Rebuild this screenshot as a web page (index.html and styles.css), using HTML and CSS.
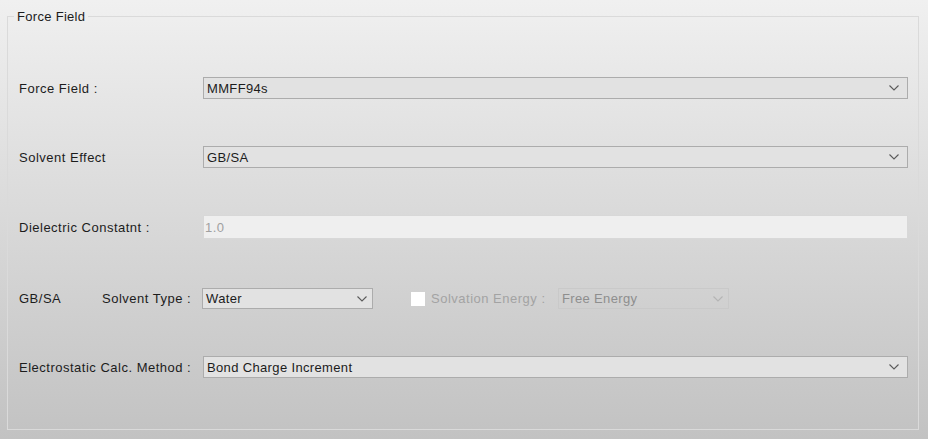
FILE: index.html
```html
<!DOCTYPE html>
<html>
<head>
<meta charset="utf-8">
<link rel="stylesheet" href="styles.css">
</head>
<body>
<fieldset class="group">
  <legend class="group-title">Force Field</legend>
  <div class="rows">
    <div class="row">
      <span class="label">Force Field :</span>
      <div class="combo"><span class="value">MMFF94s</span><svg class="chev" width="10" height="6" viewBox="0 0 10 6"><path d="M0.5 0.5 L5 5 L9.5 0.5" fill="none" stroke="#5a5a5a" stroke-width="1.1"/></svg></div>
    </div>
    <div class="row">
      <span class="label">Solvent Effect</span>
      <div class="combo"><span class="value">GB/SA</span><svg class="chev" width="10" height="6" viewBox="0 0 10 6"><path d="M0.5 0.5 L5 5 L9.5 0.5" fill="none" stroke="#5a5a5a" stroke-width="1.1"/></svg></div>
    </div>
    <div class="row row-input">
      <span class="label">Dielectric Constatnt :</span>
      <div class="textbox disabled"><span class="value">1.0</span></div>
    </div>
    <div class="row row-gbsa">
      <span class="label-short">GB/SA</span>
      <span class="label-mid">Solvent Type :</span>
      <div class="combo combo-small"><span class="value">Water</span><svg class="chev" width="10" height="6" viewBox="0 0 10 6"><path d="M0.5 0.5 L5 5 L9.5 0.5" fill="none" stroke="#5a5a5a" stroke-width="1.1"/></svg></div>
      <span class="check"></span>
      <span class="label-dis">Solvation Energy :</span>
      <div class="combo combo-small combo-dis"><span class="value">Free Energy</span><svg class="chev" width="10" height="6" viewBox="0 0 10 6"><path d="M0.5 0.5 L5 5 L9.5 0.5" fill="none" stroke="#b4b4b4" stroke-width="1.1"/></svg></div>
    </div>
    <div class="row">
      <span class="label">Electrostatic Calc. Method :</span>
      <div class="combo"><span class="value">Bond Charge Increment</span><svg class="chev" width="10" height="6" viewBox="0 0 10 6"><path d="M0.5 0.5 L5 5 L9.5 0.5" fill="none" stroke="#5a5a5a" stroke-width="1.1"/></svg></div>
    </div>
  </div>
</fieldset>
</body>
</html>
```
FILE: styles.css
```css
html, body {
  margin: 0;
  padding: 0;
}
body {
  width: 928px;
  height: 439px;
  overflow: hidden;
  background: linear-gradient(to bottom, #f0f0f0 0%, #c2c2c2 100%);
  font-family: "Liberation Sans", Arial, sans-serif;
  font-size: 13px;
  letter-spacing: 0.5px;
  color: #1c1c1c;
}
.group {
  box-sizing: border-box;
  margin: 9px 9px 0 7px;
  height: 421px;
  border: 1px solid #dadada;
  padding: 53px 10px 0 11px;
}
.group-title {
  margin-left: -5px;
  padding: 0 3px;
  line-height: 15px;
  letter-spacing: 0.3px;
}
.rows {
  display: flex;
  flex-direction: column;
  gap: 47px;
}
.row {
  display: flex;
  align-items: center;
  height: 22px;
}
.row-input {
  height: 24px;
}
.row-gbsa {
  margin-top: 2px;
  height: 21px;
}
.label {
  width: 184px;
  flex: none;
}
.label-short {
  width: 83px;
  flex: none;
}
.label-mid {
  width: 100px;
  flex: none;
}
.combo {
  flex: 1;
  box-sizing: border-box;
  height: 22px;
  border: 1px solid #acacac;
  background: #e2e2e2;
  display: flex;
  align-items: center;
  padding: 0 8px 0 3px;
  letter-spacing: 0.35px;
}
.combo .value {
  flex: 1;
}
.chev {
  flex: none;
}
.combo-small {
  flex: none;
  width: 171px;
  height: 21px;
  padding-right: 5px;
}
.combo-dis {
  background: transparent;
  border-color: #c9c9c9;
  color: #8e8e8e;
}
.check {
  width: 14px;
  height: 14px;
  background: #ffffff;
  margin-left: 38px;
  margin-right: 6px;
  flex: none;
}
.label-dis {
  color: #a3a3a3;
  width: 127px;
  flex: none;
}
.textbox {
  flex: 1;
  box-sizing: border-box;
  height: 24px;
  border: 1px solid #d8d8d8;
  display: flex;
  align-items: center;
  padding-left: 1px;
}
.textbox.disabled {
  background: #efefef;
  color: #a0a0a0;
}
```
